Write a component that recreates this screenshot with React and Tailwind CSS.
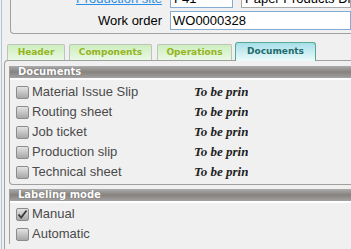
const docs = ['Material Issue Slip', 'Routing sheet', 'Job ticket', 'Production slip', 'Technical sheet'];

const Check = ({ checked }) => (
  <div className="w-[13px] h-[13px] shrink-0 rounded-[2px] border border-[#8c8c8c] bg-gradient-to-b from-[#e4e4e4] via-[#c4c4c4] to-[#a8a8a8] flex items-center justify-center">
    {checked && (
      <svg width="11" height="11" viewBox="0 0 11 11">
        <polyline points="1.5,5.5 4.2,8.5 9.5,1.5" fill="none" stroke="#3a3a3a" strokeWidth="1.8" />
      </svg>
    )}
  </div>
);

const Bar = ({ title }) => (
  <>
    <div className="h-[12px] bg-gradient-to-b from-[#acacac] via-[#86827e] to-[#a2a2a2] pl-[8px] text-[10px] leading-[12px] font-bold text-white font-['DejaVu_Sans',sans-serif] [text-shadow:0_0_1px_#555]">
      {title}
    </div>
    <div className="h-[2px] bg-white" />
  </>
);

const Tab = ({ label, w, mr, active }) =>
  active ? (
    <div
      className={`${w} ${mr} h-[19px] rounded-t-[3px] border border-b-0 border-[#56aa92] bg-gradient-to-b from-[#a6dfea] to-[#eefafa] flex items-center justify-center text-[9px] font-bold text-[#1d6b6b] font-['DejaVu_Sans',sans-serif]`}
    >
      {label}
    </div>
  ) : (
    <div
      className={`${w} ${mr} h-[16px] mb-[1px] rounded-t-[2px] border border-b-0 border-[#bcc4bc] bg-gradient-to-b from-[#cdeebe] to-[#eaf8e4] flex items-center justify-center text-[9px] font-bold text-[#94b41c] font-['DejaVu_Sans',sans-serif]`}
    >
      {label}
    </div>
  );

export default function App() {
  return (
    <div className="w-[351px] h-[249px] overflow-hidden bg-[#f0f0f0] font-['Liberation_Sans',sans-serif] text-[13px]">
      <div className="ml-[1px] h-full border-l border-[#b4c4d4] flex flex-col">
        {/* order header group */}
        <div className="ml-[8px] -mt-[11px] border-l border-b border-[#a0a0a0] rounded-bl-[4px] flex flex-col gap-[3px] pb-[3px]">
          <div className="flex items-center h-[19px]">
            <div className="w-[151px] text-right text-[#2b8ee6] underline whitespace-nowrap">Production site</div>
            <div className="ml-[8px] w-[63px] h-[19px] border border-[#84acd2] bg-white px-[3px] leading-[17px] text-black">F41</div>
            <div className="ml-[8px] flex-1 h-[19px] border border-[#a8a8a8] bg-white px-[3px] leading-[17px] text-black whitespace-nowrap overflow-hidden">Paper Products Division</div>
          </div>
          <div className="flex items-center h-[19px]">
            <div className="w-[151px] text-right text-black">Work order</div>
            <div className="ml-[8px] flex-1 h-[19px] border border-[#84acd2] bg-white px-[2px] leading-[17px] text-black">WO0000328</div>
          </div>
        </div>

        {/* tabs */}
        <div className="mt-[8px] h-[19px] flex items-end pl-[5px] relative z-10 -mb-[1px]">
          <Tab label="Header" w="w-[58px]" mr="mr-[4px]" />
          <Tab label="Components" w="w-[83px]" mr="mr-[5px]" />
          <Tab label="Operations" w="w-[75px]" mr="mr-[3px]" />
          <Tab label="Documents" w="w-[81px]" mr="" active />
        </div>

        <div className="ml-[2px] flex-1 border-l border-t border-[#a0a0a0] rounded-tl-[4px] pl-[4px] pt-[5px]">
          <div className="border-l border-b border-[#a0a0a0] rounded-bl-[4px] pb-[2px]">
            <Bar title="Documents" />
            <div className="pt-[2px]">
              {docs.map((d) => (
                <div key={d} className="h-[20px] flex items-center pl-[6px]">
                  <Check />
                  <div className="ml-[3px] w-[162px] text-[#4a4a4a] whitespace-nowrap">{d}</div>
                  <div className="w-[54px] overflow-hidden whitespace-nowrap italic font-bold text-[13px] text-[#222] font-['Liberation_Serif',serif]">
                    To be printed
                  </div>
                </div>
              ))}
            </div>
          </div>

          <div className="mt-[4px] border-l border-[#a0a0a0]">
            <Bar title="Labeling mode" />
            <div className="pt-[1px]">
              <div className="h-[20px] flex items-center pl-[6px]">
                <Check checked />
                <div className="ml-[3px] text-[#4a4a4a]">Manual</div>
              </div>
              <div className="h-[20px] flex items-center pl-[6px]">
                <Check />
                <div className="ml-[3px] text-[#4a4a4a]">Automatic</div>
              </div>
            </div>
          </div>
        </div>
      </div>
    </div>
  );
}
